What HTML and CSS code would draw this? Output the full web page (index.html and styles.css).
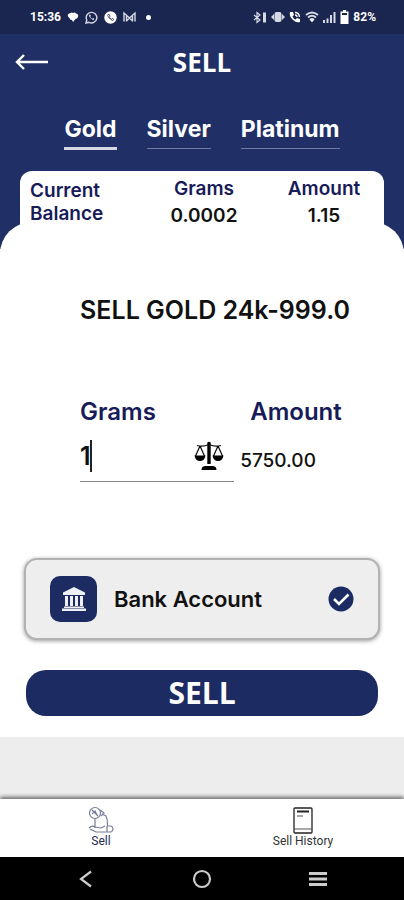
FILE: index.html
```html
<!DOCTYPE html>
<html lang="en">
<head>
<meta charset="utf-8">
<meta name="viewport" content="width=device-width, initial-scale=1">
<title>Sell</title>
<link rel="stylesheet" href="styles.css">
</head>
<body>
<div class="status">
  <div class="status-group">
    <span>15:36</span>
    <svg width="12" height="12" viewBox="0 0 12 12"><path d="M3.500 2Q5 1 6 2Q8 1 9 2.500Q12 3 11 6Q10 8 8.500 8L6 11L5 9Q2.500 9 2.500 7Q0 5 1 3.500Q2 2 3.500 2z" fill="#fff"/></svg>
    <svg width="13" height="13" viewBox="0 0 13 13"><path d="M1 12l.8-3A5.300 5.300 0 1 1 4 11.300z" fill="none" stroke="#d5d9e4" stroke-width="1.400"/><path d="M4.300 3.800q-.8 1 .6 2.800T8 9q1.200 0 1.400-1.200L8 7l-.8.7q-1.300-.6-1.900-1.900l.6-.7-.6-1.500z" fill="#d5d9e4"/></svg>
    <svg width="13" height="13" viewBox="0 0 13 13"><circle cx="6.500" cy="6.500" r="6.200" fill="#fff"/><path d="M4 3.500q-.8 1 .8 3T8.500 9.500q1.200-.2 1.200-1.300L8.200 7.400l-.8.7Q6 7.400 5.300 6l.7-.8-.7-1.700z" fill="none" stroke="#26345f" stroke-width=".8"/></svg>
    <svg width="13" height="12" viewBox="0 0 13 12"><path d="M1 10.500V2l5.500 5L12 2v8.500M3.500 10.500V5M9.500 10.500V5M3.500 10l3-3 3 3" fill="none" stroke="#d5d9e4" stroke-width="1.400"/></svg>
    <svg class="dot" width="5" height="5" viewBox="0 0 5 5"><circle cx="2.500" cy="2.500" r="2.500" fill="#fff"/></svg>
  </div>
  <div class="status-group">
    <svg width="14" height="13" viewBox="0 0 14 13"><path d="M1 4l6 5-3 2.500V1.500L7 4 1 9" fill="none" stroke="#d5d9e4" stroke-width="1.200"/><path d="M10 1.500h3v10h-3z" fill="#d5d9e4"/></svg>
    <svg width="14" height="12" viewBox="0 0 14 12"><path d="M0 6l3-3v6zM14 6l-3-3v6z" fill="#d5d9e4"/><rect x="3.500" y="1" width="7" height="10" rx="2" fill="#d5d9e4"/></svg>
    <svg width="12" height="12" viewBox="0 0 12 12"><path d="M1 1h3l1 3-1.500 1.500q1 2.500 3 3L8 7l3 1v3Q7 12 3.500 8.500T1 1z" fill="#fff"/><path d="M6 1.500q4 0 4.500 4.500M6 4q2 0 2 2" fill="none" stroke="#fff" stroke-width="1.300"/></svg>
    <svg width="14" height="12" viewBox="0 0 14 12"><path d="M1 4q6-5 12 0M3 6.500q4-3.500 8 0M5 9q2-2 4 0" fill="none" stroke="#d5d9e4" stroke-width="1.800"/><path d="M5 8.500h4L7 11.500z" fill="#fff"/></svg>
    <svg width="13" height="12" viewBox="0 0 13 12"><path d="M0 9h2v3H0zM3.500 7.500h2V12h-2zM7 4h2v8H7zM10.500 1h2v11h-2z" fill="#d5d9e4"/></svg>
    <svg width="9" height="14" viewBox="0 0 9 14"><path d="M3 0h3v1.500h2.500V14h-8V1.500H3z" fill="#fff"/><path d="M2 3h5v2H2z" fill="#1a2550"/></svg>
    <span>82%</span>
  </div>
</div>

<header class="hero">
  <div class="title-bar">
    <button class="back" aria-label="Back"><svg width="34" height="18" viewBox="0 0 34 18"><path d="M33 9H2M9 2L2 9l7 7" fill="none" stroke="#fff" stroke-width="2.400"/></svg></button>
    <h1>SELL</h1>
  </div>
  <nav class="tabs">
    <a class="tab active" href="#gold">Gold</a>
    <a class="tab" href="#silver">Silver</a>
    <a class="tab" href="#platinum">Platinum</a>
  </nav>
  <dl class="balance">
    <div class="balance-name">Current<br>Balance</div>
    <div class="balance-item"><dt>Grams</dt><dd>0.0002</dd></div>
    <div class="balance-item"><dt>Amount</dt><dd>1.15</dd></div>
  </dl>
</header>

<main class="sheet">
  <h2>SELL GOLD 24k-999.0</h2>
  <div class="fields">
    <div class="field">
      <label for="grams">Grams</label>
      <div class="entry">
        <input id="grams" type="text" inputmode="decimal" value="1">
        <span class="caret"></span>
        <svg width="30" height="30" viewBox="0 0 30 30"><path d="M13.300 1.500Q15 0 16.700 1.500V23h-3.400z"/><path d="M3 4.500Q9 6 15 3.500Q21 6 27 4.500M6 5L1.500 15M6 5l4.500 10M24 5l-4.500 10M24 5l4.500 10" fill="none" stroke="#0b0b0b" stroke-width="1.200"/><path d="M.5 14.500h11Q10.500 20 6 20T.5 14.500zM18.500 14.500h11Q28.500 20 24 20t-5.500-5.500zM7.500 29q0-4 4-4h7q4 0 4 4z"/></svg>
      </div>
    </div>
    <div class="field amount">
      <span class="label">Amount</span>
      <output for="grams">5750.00</output>
    </div>
  </div>
  <label class="account">
    <span class="bank"><svg width="26" height="26" viewBox="0 0 26 26"><path d="M13 1l11 5.500V9H2V6.500zM4 10h3v10H4zM9 10h3v10H9zM14 10h3v10h-3zM19 10h3v10h-3zM3 20.500h20V22H3zM1 22.500h24V25H1z" fill="#eef0f5"/></svg></span>
    <span class="account-name">Bank Account</span>
    <input class="check" type="radio" name="account" checked>
    <svg class="mark" width="26" height="26" viewBox="0 0 26 26"><circle cx="13" cy="13" r="12.500" fill="#1c2b62"/><path d="M6 13l5 5 9.500-9.500" fill="none" stroke="#fff" stroke-width="2.600"/></svg>
  </label>
  <button class="sell">SELL</button>
</main>

<nav class="bottom">
  <a class="current" href="#sell">
    <svg width="26" height="28" viewBox="0 0 26 28"><g fill="none" stroke="#777b96" stroke-width="1.200"><circle cx="7" cy="7" r="5.500"/><path d="M4 4l6 6M4 8l3-3 2 4M12 4l4 3-3 3M7 13v9M14 8l4 2q1.500 3 1.500 8v2M1 22q3-3 6-1l6 1 4-2M2 23l6 3h15q2-1 2-3t-2-3h-4M19 20v6"/></g></svg>
    <span>Sell</span>
  </a>
  <a href="#history">
    <svg width="26" height="28" viewBox="0 0 26 28"><rect x="4" y="2" width="18" height="25" rx="1" fill="none" stroke="#222" stroke-width="1.300"/><path d="M7 5.500h12" stroke="#222" stroke-width="2"/><path d="M7 10h6M4 23h18" stroke="#555" stroke-width="1.200"/></svg>
    <span>Sell History</span>
  </a>
</nav>
<div class="system">
  <button aria-label="System back"><svg width="20" height="20" viewBox="0 0 20 20"><path d="M15 2.500L5 10l10 7.500" fill="none" stroke="#ccc" stroke-width="2.200"/></svg></button>
  <button aria-label="Home"><svg width="20" height="20" viewBox="0 0 20 20"><circle cx="10" cy="10" r="8" fill="none" stroke="#ccc" stroke-width="2.200"/></svg></button>
  <button aria-label="Recent apps"><svg width="20" height="20" viewBox="0 0 20 20"><path d="M1 4.500h18M1 10h18M1 15.500h18" stroke="#ccc" stroke-width="3"/></svg></button>
</div>
</body>
</html>
```
FILE: styles.css
```css
* { box-sizing: border-box; }
body {
  margin: 0;
  min-height: 100vh;
  display: flex;
  flex-direction: column;
  background: #ededed;
  color: #111;
  font-family: Inter, "Open Sans", sans-serif;
  font-weight: 600;
}
svg { display: block; flex: none; }
a { color: inherit; text-decoration: none; }
button { border: 0; padding: 0; background: none; color: inherit; font: inherit; }
h1, h2, dl, dd { margin: 0; }

.status {
  display: flex;
  justify-content: space-between;
  height: 34px;
  padding: 0 28px 0 30px;
  background: #1a2550;
  color: #fff;
  font: 700 12px/34px Roboto, sans-serif;
}
.status-group { display: flex; align-items: center; gap: 6px; }
.status-group:last-child { gap: 4px; }
.dot { margin-left: 4px; }

.hero {
  padding: 0 20px;
  background: #203066;
  color: #fff;
}
.title-bar {
  display: grid;
  grid-template-columns: 1fr auto 1fr;
  align-items: center;
  height: 56px;
  margin: 0 -5px;
}
h1 { font: 700 26px/32px "Open Sans", sans-serif; }
.tabs {
  display: flex;
  justify-content: center;
  align-items: flex-start;
  gap: 30px;
  padding: 24px 0 21px;
}
.tab {
  padding-bottom: 4px;
  border-bottom: 1px solid #707ba3;
  font-size: 23px;
  font-weight: 700;
  line-height: 30px;
}
.tab.active { padding-bottom: 3px; border-bottom: 3px solid #d5d7e3; }
.balance {
  display: grid;
  grid-template-columns: 114px 1fr 1fr;
  padding: 6px 0 22px 10px;
  border-radius: 12px 12px 0 0;
  background: #fff;
  color: #171b58;
  font-size: 19px;
  line-height: 23px;
  text-align: center;
}
.balance-name { padding-top: 2px; text-align: left; }
dd { padding-top: 4px; color: #111; }

.sheet {
  margin-top: -27px;
  padding: 70px 24px 21px;
  border-radius: 32px 32px 0 0;
  background: #fff;
}
h2 { padding-left: 26px; font-size: 25px; font-weight: 600; line-height: 36px; text-align: center; }
.fields {
  display: flex;
  gap: 6px;
  padding: 66px 37px 0 56px;
}
.field { flex: 3; min-width: 0; }
.field.amount { flex: 2; }
.field label, .label {
  display: block;
  color: #171b58;
  font-size: 24px;
  line-height: 36px;
}
.label { padding-left: 10px; }
.entry {
  position: relative;
  display: flex;
  align-items: center;
  height: 52px;
  padding-right: 10px;
  border-bottom: 1px solid #888;
}
.entry input {
  width: 100%;
  min-width: 0;
  padding: 0;
  border: 0;
  outline: 0;
  background: none;
  color: #111;
  font: 600 25px/32px Inter, sans-serif;
}
.caret {
  position: absolute;
  top: 10px;
  left: 10px;
  width: 2px;
  height: 32px;
  background: #222;
}
output { display: block; padding-top: 10px; font-size: 19px; font-weight: 500; line-height: 42px; }

.account {
  position: relative;
  display: flex;
  align-items: center;
  gap: 17px;
  margin: 76px 0 0;
  padding: 16px 24px;
  border: 2px solid #b2b2b2;
  border-radius: 13px;
  background: #eee;
  box-shadow: 0 1px 4px #999;
  font-size: 22px;
}
.bank {
  display: grid;
  place-items: center;
  width: 47px;
  height: 46px;
  border-radius: 10px;
  background: #1c2b62;
}
.account-name { flex: 1; }
.check { position: absolute; right: 24px; opacity: 0; }
.sell {
  display: block;
  width: calc(100% - 4px);
  height: 46px;
  margin: 30px 2px 0;
  border-radius: 20px;
  background: #1c2b62;
  color: #fff;
  font: 700 30px/46px "Open Sans", sans-serif;
}

.bottom {
  display: grid;
  grid-template-columns: 1fr 1fr;
  height: 58px;
  margin-top: auto;
  background: #fff;
  box-shadow: 0 -2px 4px #666;
  color: #333;
  font: 400 12px/14px Roboto, sans-serif;
}
.bottom a { display: flex; flex-direction: column; align-items: center; padding-top: 7px; }
.bottom .current { color: #242955; }
.system {
  display: flex;
  justify-content: center;
  gap: 96px;
  height: 43px;
  background: #000;
}
```
